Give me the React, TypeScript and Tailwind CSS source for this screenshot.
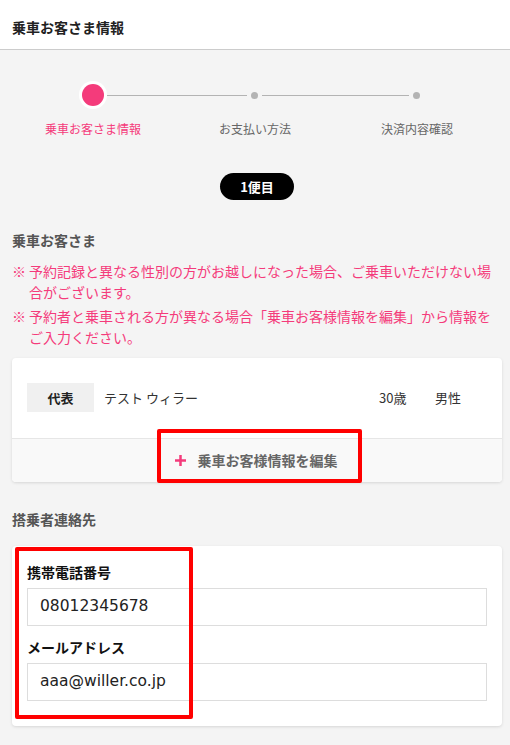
import React from "react";

const PINK = "#f43b7b";

export default function App() {
  return (
    <div
      className="w-[510px] min-h-[745px] bg-[#f4f4f4] text-[#222]"
      style={{ fontFamily: '"Noto Sans CJK JP", "Noto Sans", sans-serif' }}
    >
      <div className="h-[50px] bg-white border-b border-[#cccccc] pl-3 pt-[17px]">
        <div className="text-[14px] leading-5 font-bold text-[#222]">乗車お客さま情報</div>
      </div>

      {/* stepper */}
      <div className="pt-[31px]">
        <div className="flex items-center pl-[79px] h-[28px]">
          <div className="w-[28px] h-[28px] rounded-full bg-white flex items-center justify-center">
            <div className="w-[22px] h-[22px] rounded-full bg-[#f43b7b]" />
          </div>
          <div className="w-[140px] h-px bg-[#b3b3b3]" />
          <div className="ml-[4px] w-[7px] h-[7px] rounded-full bg-[#b3b3b3]" />
          <div className="ml-[4px] w-[147px] h-px bg-[#b3b3b3]" />
          <div className="ml-[4px] w-[7px] h-[7px] rounded-full bg-[#b3b3b3]" />
        </div>
        <div className="grid grid-cols-3 px-3 mt-[12px] text-[12px] leading-4 text-center">
          <div className="text-[#f43b7b]">乗車お客さま情報</div>
          <div className="text-[#666]">お支払い方法</div>
          <div className="text-[#666]">決済内容確認</div>
        </div>
      </div>

      <div className="flex justify-center mt-[36px] pl-[4px]">
        <div className="h-[27px] w-[74px] rounded-full bg-black text-white text-[13px] font-bold flex items-center justify-center">
          1便目
        </div>
      </div>

      <div className="pl-3 pr-2">
        <div className="mt-[30px] text-[14px] leading-5 font-bold text-[#555]">乗車お客さま</div>

        <div className="mt-[11px] text-[14px] leading-[21px]" style={{ color: PINK }}>
          <div className="flex">
            <span className="w-[17px] shrink-0">※</span>
            <span>予約記録と異なる性別の方がお越しになった場合、ご乗車いただけない場合がございます。</span>
          </div>
          <div className="flex mt-[3px]">
            <span className="w-[17px] shrink-0">※</span>
            <span>予約者と乗車される方が異なる場合「乗車お客様情報を編集」から情報をご入力ください。</span>
          </div>
        </div>

        {/* passenger card */}
        <div className="relative mt-[10px] bg-white rounded-[4px] shadow-[0_1px_3px_rgba(0,0,0,0.12)]">
          <div className="flex items-center pt-[25px] pb-[26px] pl-[15px] pr-[15px] text-[13px]">
            <div className="w-[67px] h-[29px] bg-[#f0f0f0] flex items-center justify-center font-bold text-[#222]">
              代表
            </div>
            <div className="flex-1 ml-[10px] text-[#333]">テスト ウィラー</div>
            <div className="w-[56px] text-[#333]">30歳</div>
            <div className="w-[52px] text-[#333]">男性</div>
          </div>
          <div className="h-[44px] border-t border-[#e6e6e6] bg-[#f9f9f9] rounded-b-[4px] flex items-center justify-center pr-[2px]">
            <svg width="11" height="11" viewBox="0 0 11 11" className="mr-[12px]">
              <rect x="4.25" y="0" width="2.5" height="11" fill={PINK} />
              <rect x="0" y="4.25" width="11" height="2.5" fill={PINK} />
            </svg>
            <span className="text-[14px] font-bold text-[#666]">乗車お客様情報を編集</span>
          </div>
          <div className="absolute left-[145px] top-[71px] w-[205px] h-[54px] border-4 border-[#ff0000] rounded-[2px]" />
        </div>

        <div className="mt-[27px] text-[14px] leading-5 font-bold text-[#555]">搭乗者連絡先</div>

        {/* contact card */}
        <div className="relative mt-[17px] bg-white rounded-[4px] shadow-[0_1px_3px_rgba(0,0,0,0.12)] px-[15px] pt-4 pb-[25px]">
          <div className="text-[14px] leading-5 font-bold text-[#111]">携帯電話番号</div>
          <div
            className="mt-[6px] h-[38px] border border-[#dddddd] bg-white flex items-center pl-[12px] text-[15.5px] text-[#222]"
            style={{ fontFamily: '"DejaVu Sans", "Noto Sans CJK JP", sans-serif' }}
          >
            08012345678
          </div>
          <div className="mt-[11px] text-[14px] leading-5 font-bold text-[#111]">メールアドレス</div>
          <div
            className="mt-[6px] h-[38px] border border-[#dddddd] bg-white flex items-center pl-[12px] text-[15.5px] text-[#222]"
            style={{ fontFamily: '"DejaVu Sans", "Noto Sans CJK JP", sans-serif' }}
          >
            aaa@willer.co.jp
          </div>
          <div className="absolute left-[3px] top-[1px] w-[178px] h-[172px] border-4 border-[#ff0000] rounded-[2px]" />
        </div>
      </div>
    </div>
  );
}
